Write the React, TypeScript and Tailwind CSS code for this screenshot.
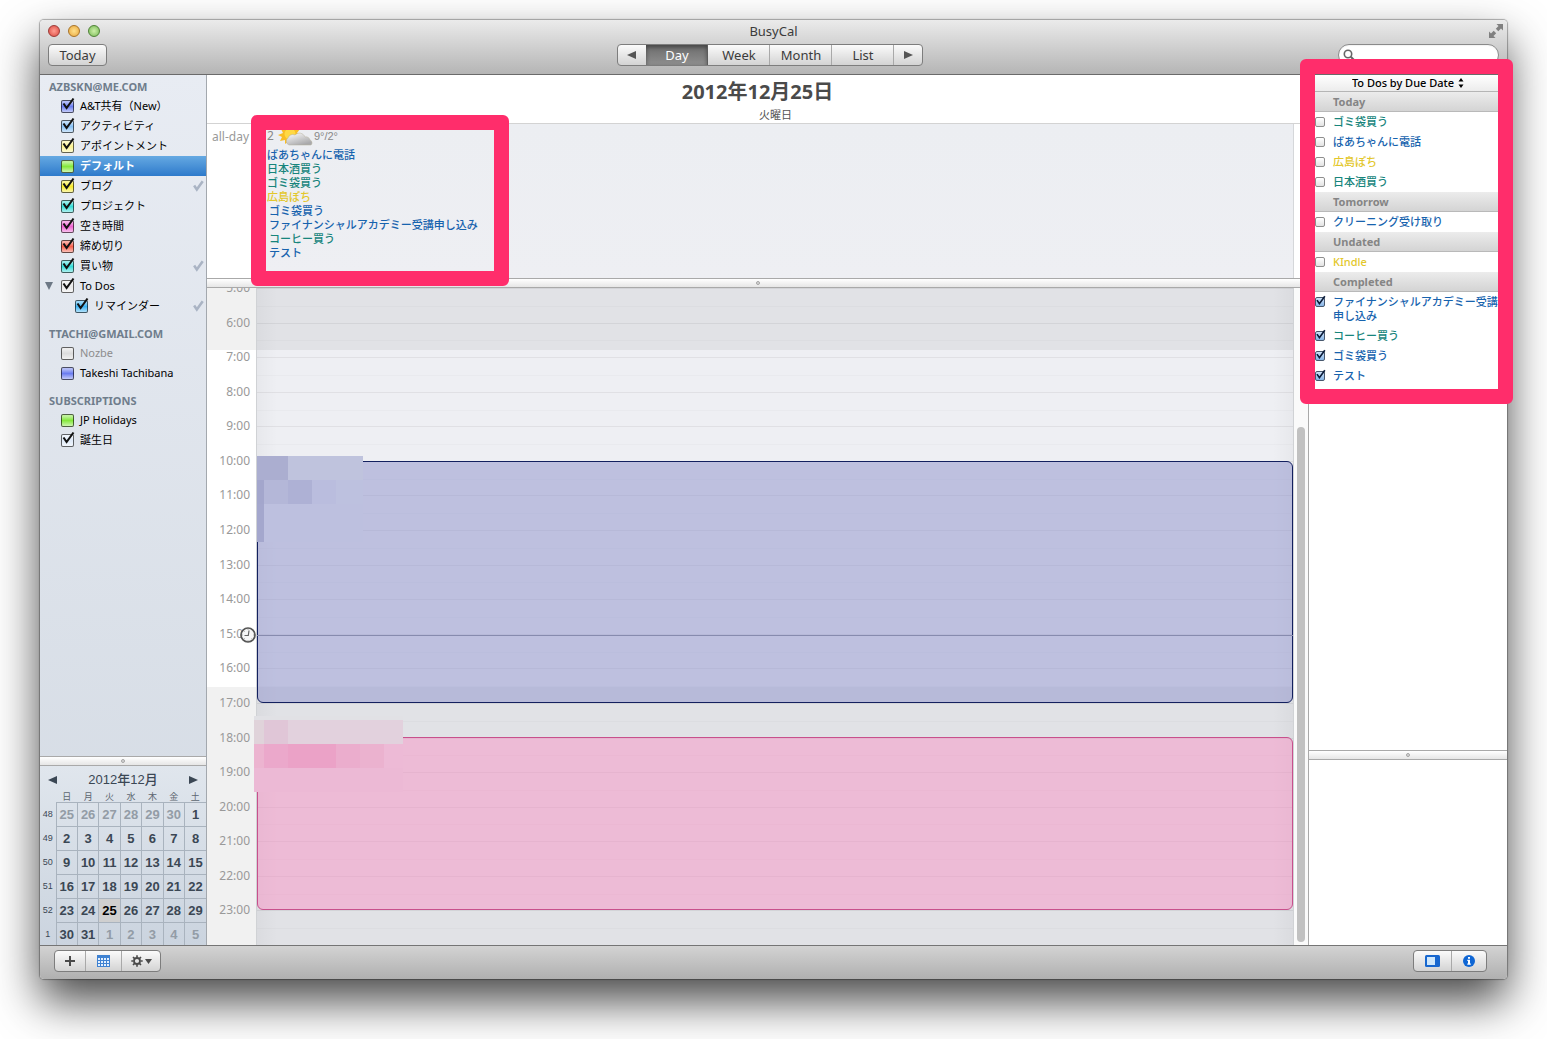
import React from "react";
import clsx from "clsx";

type CalendarItem = {
  name: string;
  color: string;
  checked?: boolean;
  synced?: boolean;
  selected?: boolean;
  muted?: boolean;
  nested?: boolean;
  expandable?: boolean;
};

const calendarGroups: { title: string; items: CalendarItem[] }[] = [
  {
    title: "AZBSKN@ME.COM",
    items: [
      { name: "A&T共有（New）", color: "bg-[#6b7df0]", checked: true },
      { name: "アクティビティ", color: "bg-[#86c0f5]", checked: true },
      { name: "アポイントメント", color: "bg-[#fbf290]", checked: true },
      { name: "デフォルト", color: "bg-[#84e83c]", selected: true },
      { name: "ブログ", color: "bg-[#f7ea2c]", checked: true, synced: true },
      { name: "プロジェクト", color: "bg-[#35dcd8]", checked: true },
      { name: "空き時間", color: "bg-[#ee62d2]", checked: true },
      { name: "締め切り", color: "bg-[#f7604c]", checked: true },
      { name: "買い物", color: "bg-[#35dcd8]", checked: true, synced: true },
      { name: "To Dos", color: "bg-[#e8e8e8]", checked: true, expandable: true },
      { name: "リマインダー", color: "bg-[#3db4f5]", checked: true, synced: true, nested: true },
    ],
  },
  {
    title: "TTACHI@GMAIL.COM",
    items: [
      { name: "Nozbe", color: "bg-[#dcdcdc]", muted: true },
      { name: "Takeshi Tachibana", color: "bg-[#6b7df0]" },
    ],
  },
  {
    title: "SUBSCRIPTIONS",
    items: [
      { name: "JP Holidays", color: "bg-[#84e83c]" },
      { name: "誕生日", color: "bg-[#dfeaf8]", checked: true },
    ],
  },
];

const BLUE = "text-[#1763ae]";
const GREEN = "text-[#17857c]";
const YELLOW = "text-[#e3c72b]";

const allDayItems = [
  { text: "ばあちゃんに電話", color: BLUE },
  { text: "日本酒買う", color: GREEN },
  { text: "ゴミ袋買う", color: GREEN },
  { text: "広島ぽち", color: YELLOW },
  { text: "ゴミ袋買う", color: BLUE, done: true },
  { text: "ファイナンシャルアカデミー受講申し込み", color: BLUE, done: true },
  { text: "コーヒー買う", color: GREEN, done: true },
  { text: "テスト", color: BLUE, done: true },
];

const todoGroups = [
  {
    title: "Today",
    items: [
      { text: "ゴミ袋買う", color: GREEN },
      { text: "ばあちゃんに電話", color: BLUE },
      { text: "広島ぽち", color: YELLOW },
      { text: "日本酒買う", color: GREEN },
    ],
  },
  { title: "Tomorrow", items: [{ text: "クリーニング受け取り", color: BLUE }] },
  { title: "Undated", items: [{ text: "KIndle", color: YELLOW }] },
  {
    title: "Completed",
    done: true,
    items: [
      { text: "ファイナンシャルアカデミー受講申し込み", color: BLUE },
      { text: "コーヒー買う", color: GREEN },
      { text: "ゴミ袋買う", color: BLUE },
      { text: "テスト", color: BLUE },
    ],
  },
];

const weekdays = ["日", "月", "火", "水", "木", "金", "土"];

const weeks = [
  { week: 48, days: [25, 26, 27, 28, 29, 30, 1] },
  { week: 49, days: [2, 3, 4, 5, 6, 7, 8] },
  { week: 50, days: [9, 10, 11, 12, 13, 14, 15] },
  { week: 51, days: [16, 17, 18, 19, 20, 21, 22] },
  { week: 52, days: [23, 24, 25, 26, 27, 28, 29] },
  { week: 1, days: [30, 31, 1, 2, 3, 4, 5] },
];

const FIRST_HOUR = 5;
const LAST_HOUR = 24;
const hours = Array.from({ length: LAST_HOUR - FIRST_HOUR }, (_, i) => FIRST_HOUR + i);

const toPercent = (hour: number) => `${((hour - FIRST_HOUR) / (LAST_HOUR - FIRST_HOUR)) * 100}%`;
const span = (from: number, to: number): React.CSSProperties => ({
  top: toPercent(from),
  height: `${((to - from) / (LAST_HOUR - FIRST_HOUR)) * 100}%`,
});

const views = ["Day", "Week", "Month", "List"];

const BUTTON_FACE = "border border-[#7d7d7d] bg-linear-to-b from-[#fbfbfb] to-[#d3d3d3] rounded";

function Tick({ className, weight = 2.1 }: { className?: string; weight?: number }) {
  return (
    <svg viewBox="0 0 14 14" className={className} fill="none" aria-hidden="true">
      <path d="M2.5 6.5 5.6 11 12.5 1.5" stroke="currentColor" strokeWidth={weight} />
    </svg>
  );
}

function Splitter() {
  return (
    <div className="flex h-[10px] shrink-0 items-center justify-center border-y border-[#a9a9a9] bg-linear-to-b from-white to-[#e6e6e6]">
      <span className="size-1 rounded-full border border-[#a5a5a5] bg-[#d8d8d8]" />
    </div>
  );
}

function Triangle({ direction }: { direction: "left" | "right" | "down" }) {
  const paths = { left: "M9 1 0 5 9 9Z", right: "M1 1 10 5 1 9Z", down: "M1 1 9 1 5 9Z" };
  return (
    <svg viewBox="0 0 10 10" className="size-[10px]" fill="currentColor" aria-hidden="true">
      <path d={paths[direction]} />
    </svg>
  );
}

function TitleBar() {
  const [view, setView] = React.useState("Day");

  return (
    <header className="shrink-0 rounded-t border-b border-[#6a6a6a] bg-linear-to-b from-[#ebebeb] to-[#b5b5b5] pb-2">
      <div className="grid h-[22px] grid-cols-3 items-center px-2">
        <div className="flex gap-2">
          <button type="button" aria-label="Close" className="size-3 rounded-full border border-[#9c3a36] bg-radial from-[#ff9d92] to-[#d8443f]" />
          <button type="button" aria-label="Minimize" className="size-3 rounded-full border border-[#a87328] bg-radial from-[#ffe18b] to-[#e8a637]" />
          <button type="button" aria-label="Zoom" className="size-3 rounded-full border border-[#4f8237] bg-radial from-[#cdf0a9] to-[#76b953]" />
        </div>
        <h1 className="text-center text-[13px] leading-4 text-[#3b3b3b]">BusyCal</h1>
        <button type="button" aria-label="Full screen" className="-mr-1 justify-self-end text-[#808080]">
          <svg viewBox="0 0 14 14" className="size-[14px]" fill="currentColor">
            <path d="M7.500 0H14v6.500l-2-2L9.300 7.200 6.800 4.700 9.500 2ZM0 7.500l2 2 2.700-2.700 2.500 2.500L4.500 12l2 2H0Z" />
          </svg>
        </button>
      </div>
      <div className="mt-0.5 grid grid-cols-3 items-center px-2">
        <button type="button" className={clsx(BUTTON_FACE, "h-[22px] w-[59px] text-[13px] leading-4 text-[#3b3b3b]")}>
          Today
        </button>
        <div className={clsx(BUTTON_FACE, "mr-1.5 flex h-[22px] justify-self-center overflow-hidden text-[13px] leading-4 text-[#3b3b3b]")}>
          <button type="button" aria-label="Previous day" className="flex w-7 items-center justify-center text-[#555]">
            <Triangle direction="left" />
          </button>
          {views.map((name) => (
            <button
              key={name}
              type="button"
              aria-pressed={view === name}
              onClick={() => setView(name)}
              className={clsx(
                "w-[62px] border-r",
                view === name
                  ? "border-[#5c5c5c] bg-linear-to-b from-[#6c6c6c] to-[#8f8f8f] text-white inset-shadow-sm inset-shadow-black/40"
                  : "border-[#a9a9a9]",
              )}
            >
              {name}
            </button>
          ))}
          <button type="button" aria-label="Next day" className="flex w-7 items-center justify-center text-[#555]">
            <Triangle direction="right" />
          </button>
        </div>
        <label className="flex h-[22px] w-[161px] items-center gap-1 justify-self-end rounded-full border border-[#8a8a8a] bg-white px-1 inset-shadow-xs">
          <svg viewBox="0 0 12 12" className="size-3 shrink-0 text-[#666]" fill="none" stroke="currentColor" strokeWidth="1.6">
            <circle cx="5" cy="5" r="3.700" />
            <path d="m7.800 7.800 3.400 3.400" strokeWidth="2" />
          </svg>
          <input type="search" aria-label="Search" className="w-full min-w-0 bg-transparent text-[11px] outline-none" />
        </label>
      </div>
    </header>
  );
}

function CalendarRow({ item }: { item: CalendarItem }) {
  return (
    <li
      className={clsx(
        "flex h-5 items-center pr-0.5",
        item.nested ? "pl-[35px]" : item.expandable ? "pl-1" : "pl-[21px]",
        item.selected && "bg-linear-to-b from-[#65a9e2] to-[#2d7acb] font-bold text-white",
        item.muted && "text-[#8d8d8d]",
      )}
    >
      {item.expandable && (
        <button type="button" aria-label="Collapse" className="mr-[7px] text-[#6d7885]">
          <Triangle direction="down" />
        </button>
      )}
      <label className="flex flex-1 items-center gap-1.5">
        <span className="relative size-[13px]">
          <input
            type="checkbox"
            defaultChecked={item.checked}
            className={clsx(
              "peer block size-[13px] appearance-none rounded-xs border border-black/60 bg-linear-to-b from-white/50 from-10% via-transparent via-50% to-white/60",
              item.color,
            )}
          />
          <Tick className="pointer-events-none absolute bottom-0.5 left-0 hidden size-[14px] text-[#111] peer-checked:block" />
        </span>
        <span className="leading-4">{item.name}</span>
      </label>
      {item.synced && <Tick weight={3} className="size-3 text-[#aab4c4]" />}
    </li>
  );
}

function MiniCalendar() {
  return (
    <section className="h-[179px] shrink-0 overflow-hidden bg-linear-to-b from-[#e0e6ed] to-[#cbd4df] font-['Liberation_Sans','Noto_Sans_CJK_JP',sans-serif] text-[#3b4754]">
      <div className="flex h-[26px] items-center justify-between px-2 pt-0.5">
        <button type="button" aria-label="Previous month">
          <Triangle direction="left" />
        </button>
        <h2 className="text-[13px] leading-4 font-medium">2012年12月</h2>
        <button type="button" aria-label="Next month">
          <Triangle direction="right" />
        </button>
      </div>
      <table className="w-full table-fixed border-collapse text-center">
        <thead>
          <tr className="h-[10px] text-[9px] leading-[10px] text-[#5c6670]">
            <th className="w-4" aria-label="Week" />
            {weekdays.map((day) => (
              <th key={day} className="p-0 font-normal">{day}</th>
            ))}
          </tr>
        </thead>
        <tbody>
          {weeks.map(({ week, days }, row) => (
            <tr key={week} className="h-6">
              <th className="p-0 text-[9px] font-normal">{week}</th>
              {days.map((day, i) => {
                const outside = (row === 0 && day > 20) || (row === 5 && day < 10);
                const isToday = row === 4 && day === 25;
                return (
                  <td
                    key={i}
                    className={clsx(
                      "border-t border-l border-[#a9b3be] p-0 text-[13px] leading-4 font-bold",
                      outside && "text-[#939ca6]",
                      isToday && "bg-[#cfcfcf] text-black",
                    )}
                  >
                    {day}
                  </td>
                );
              })}
            </tr>
          ))}
        </tbody>
      </table>
    </section>
  );
}

function Sidebar() {
  return (
    <aside className="flex w-[167px] shrink-0 flex-col border-r border-[#a3a8ae] bg-linear-to-b from-[#e8ecf3] to-[#d3dae3]">
      <nav className="flex flex-1 flex-col gap-2 pt-0.5 text-[11px]">
        {calendarGroups.map((group) => (
          <section key={group.title}>
            <h2 className="h-[19px] pl-[9px] text-[11px] leading-[19px] font-bold text-[#6f7d8c]">{group.title}</h2>
            <ul>
              {group.items.map((item) => (
                <CalendarRow key={item.name} item={item} />
              ))}
            </ul>
          </section>
        ))}
      </nav>
      <Splitter />
      <MiniCalendar />
    </aside>
  );
}

function Weather() {
  return (
    <svg viewBox="0 0 36 20" className="h-5 w-9" aria-label="Partly cloudy">
      <defs>
        <linearGradient id="cloud" x1="0" y1="0" x2="0.600" y2="1">
          <stop offset="0" stopColor="#fff" />
          <stop offset="1" stopColor="#a9a9ab" />
        </linearGradient>
      </defs>
      <path
        d="M11 0l2 3 3-3 1 4 5-1-3 4 4 2-4 2 1 4-4-1-2 4-3-3-4 3 0-4-5 1 2-4-4-2 5-2-2-4 5 1Z"
        fill="#f8bd25"
      />
      <circle cx="12" cy="8" r="5.500" fill="#ffd944" />
      <path
        d="M11 19a4 4 0 0 1-1-7 5 5 0 0 1 7-3 6 6 0 0 1 10 2 4 4 0 0 1 5 3 3 3 0 0 1 1 5Z"
        fill="url(#cloud)"
        stroke="#b5b09c"
        strokeWidth="0.500"
      />
    </svg>
  );
}

function Mosaic({ rows }: { rows: { height: string; cells: string[] }[] }) {
  return (
    <>
      {rows.map((row, i) => (
        <div key={i} className={clsx("flex", row.height)}>
          {row.cells.map((cell, j) => (
            <span key={j} className={cell} />
          ))}
        </div>
      ))}
    </>
  );
}

const blueMosaic = [
  { height: "h-6", cells: ["w-[31px] bg-[#abaed0]", "flex-1 bg-[#bfc3dd]"] },
  { height: "h-6", cells: ["w-[7px] bg-[#a3a6cc]", "w-6 bg-[#b4b7d8]", "w-6 bg-[#aeb1d5]", "w-6 bg-[#babdde]", "flex-1 bg-[#bdc1df]"] },
  { height: "h-[38px]", cells: ["w-[7px] bg-[#a4a7cd]", "flex-1 bg-[#bdc0df]"] },
];

const pinkMosaic = [
  { height: "h-1", cells: ["flex-1 bg-[#e1e1e5]"] },
  { height: "h-6", cells: ["w-[10px] bg-[#e0d3da]", "w-6 bg-[#e0c6d7]", "flex-1 bg-[#e2d1dd]"] },
  { height: "h-6", cells: ["w-[10px] bg-[#ecb4d0]", "w-6 bg-[#eba8cb]", "w-12 bg-[#eba2c7]", "w-6 bg-[#ebadcd]", "w-6 bg-[#ebb2cf]", "flex-1 bg-[#edbad6]"] },
  { height: "h-6", cells: ["flex-1 bg-[#ecb9d5]"] },
];

function DayView() {
  return (
    <main className="flex min-w-0 flex-1 flex-col bg-white">
      <header className="flex h-[49px] shrink-0 flex-col items-center border-b border-[#d3d3d3] pt-[5px]">
        <h2 className="text-[20px] leading-6 font-bold text-[#4a4a4a]">2012年12月25日</h2>
        <p className="pl-9 text-[11px] leading-[22px] text-[#555]">火曜日</p>
      </header>

      <section className="flex h-[154px] shrink-0">
        <h3 className="w-[49px] shrink-0 pt-[5px] pl-[5px] text-[12px] leading-4 whitespace-nowrap text-[#999]">all-day</h3>
        <div className="relative flex-1 border-x border-[#d5d7da] bg-linear-to-b from-[#eceef2] to-[#eeeff3] px-2.5">
          <div className="flex h-6 items-center text-[11px] text-[#888]">
            <span className="text-[12px]">2</span>
            <span className="ml-1">
              <Weather />
            </span>
            <span className="font-['Liberation_Sans',sans-serif]">9°/2°</span>
          </div>
          <ul className="text-[11px] leading-[14px] font-medium">
            {allDayItems.map((item, i) => (
              <li key={i} className={clsx(item.color, item.done && "pl-0.5")}>{item.text}</li>
            ))}
          </ul>
          <div className="pointer-events-none absolute -top-[9px] -left-[6px] h-[171px] w-[258px] rounded-md border-[15px] border-[#ff2d6b]" />
        </div>
        <div className="w-[14px] shrink-0" />
      </section>

      <Splitter />

      <section className="flex min-h-0 flex-1">
        <div className="relative flex w-[49px] shrink-0 flex-col">
          <div className="absolute inset-x-0 bg-[#f1f1f1]" style={span(5, 6.8)} />
          <div className="absolute inset-x-0 bg-[#f1f1f1]" style={span(16.53, 24)} />
          <ol className="relative flex flex-1 flex-col overflow-hidden pr-1.5 text-right text-[12px] leading-4 text-[#999]">
            {hours.map((hour) => (
              <li key={hour} className="min-h-0 flex-1">
                <span className="block -translate-y-1/2">{hour}:00</span>
              </li>
            ))}
          </ol>
          <svg viewBox="0 0 16 16" style={{ top: toPercent(15.03) }} className="absolute right-0 size-4 -translate-y-1/2" aria-label="Now">
            <circle cx="8" cy="8" r="7" fill="#f6f6f6" stroke="#565656" strokeWidth="1.700" />
            <path d="M9 3.500 8.300 8.500H4.500" fill="none" stroke="#666" strokeWidth="1.200" />
            <path d="M8 2v1M8 13v1M2 8h1M13 8h1M4 12l.7-.7M11.500 11.500l.7.7M4 4l.7.700" stroke="#aaa" />
          </svg>
        </div>

        <div className="relative flex-1 border-x border-[#d0d2d5] bg-[#eeeff3]">
          <div className="absolute inset-x-0 bg-[#e1e2e6]" style={span(5, 6.8)} />
          <div className="absolute inset-x-0 bg-[#e1e2e6]" style={span(16.53, 24)} />
          <div className="relative flex h-full flex-col">
            {hours.map((hour) => (
              <div key={hour} className="flex flex-1 flex-col border-t border-black/6">
                <div className="mt-auto h-1/2 border-t border-black/2" />
              </div>
            ))}
          </div>
          <div className="absolute inset-y-0 left-0 w-5 bg-linear-to-r from-black/3 to-transparent" />
          <div className="absolute inset-y-0 right-0 w-5 bg-linear-to-l from-black/3 to-transparent" />
          <article aria-label="10:00 – 17:00" className="absolute inset-x-0 rounded-md border border-[#13205f] bg-[#8e92cb]/50" style={span(10, 17)}>
            <div className="absolute -top-1.5 -left-px w-[106px]">
              <Mosaic rows={blueMosaic} />
            </div>
          </article>
          <article aria-label="18:00 – 23:00" className="absolute inset-x-0 rounded-md border border-[#c8508c] bg-[#f994c5]/50" style={span(17.98, 22.99)}>
            <div className="absolute -top-[22px] -left-1 w-[149px]">
              <Mosaic rows={pinkMosaic} />
            </div>
          </article>
          <div className="absolute inset-x-0 border-t border-[#878bae]" style={{ top: toPercent(15.03) }} />
        </div>

        <div className="flex w-[14px] shrink-0 flex-col items-center bg-[#fafafa] pb-[3px]">
          <div className="min-h-0 flex-[27]" />
          <div className="w-2 flex-[100] rounded-full bg-[#c1c1c1]" />
        </div>
      </section>
    </main>
  );
}

function TodoPanel() {
  return (
    <aside className="relative flex w-[199px] shrink-0 flex-col border-l border-[#a9a9a9] bg-white">
      <div className="flex min-h-0 flex-1 flex-col">
        <div className="flex h-[17px] shrink-0 items-center justify-center gap-1 border-b border-[#b5b5b5] bg-linear-to-b from-white to-[#ececec]">
          <select aria-label="Sort to dos" className="field-sizing-content appearance-none text-[11px] leading-4 font-medium outline-none">
            <option>To Dos by Due Date</option>
            <option>To Dos by Priority</option>
          </select>
          <svg viewBox="0 0 6 10" className="h-[10px] w-1.5" aria-hidden="true">
            <path d="M3 0 5.500 3.500h-5ZM3 10 .5 6.500h5Z" />
          </svg>
        </div>
        {todoGroups.map((group) => (
          <section key={group.title}>
            <h3 className="h-5 border-b border-[#b9b9b9] bg-linear-to-b from-[#ececec] to-[#d4d4d4] pl-6 text-[11px] leading-[19px] font-bold text-[#858585]">
              {group.title}
            </h3>
            <ul className="text-[11px] leading-[14px] font-medium">
              {group.items.map((item) => (
                <li key={item.text}>
                  <label className="flex gap-2 py-[3px] pr-2 pl-1.5">
                    <span className="relative mt-0.5 size-[10px] shrink-0">
                      <input
                        type="checkbox"
                        defaultChecked={group.done}
                        className="peer block size-[10px] appearance-none rounded-xs border border-[#8e8e8e] bg-linear-to-b from-white to-[#e2e2e2] checked:border-[#48586e] checked:from-[#cfe2f8] checked:to-[#86b4e6]"
                      />
                      <Tick className="pointer-events-none absolute bottom-px left-0 hidden size-[11px] text-[#0a1a38] peer-checked:block" />
                    </span>
                    <span className={item.color}>{item.text}</span>
                  </label>
                </li>
              ))}
            </ul>
          </section>
        ))}
      </div>
      <Splitter />
      <div className="h-[185px] shrink-0" />
      <div className="pointer-events-none absolute -top-4 -right-1.5 -left-[9px] h-[345px] rounded-md border-[15px] border-[#ff2d6b]" />
    </aside>
  );
}

function BottomBar() {
  return (
    <footer className="flex h-[34px] shrink-0 items-start justify-between rounded-b border-t border-[#757575] bg-linear-to-b from-[#d3d3d3] to-[#b0b0b0] pt-1 pr-5 pl-[14px]">
      <div className={clsx(BUTTON_FACE, "flex h-[22px] text-[#4a4a4a]")}>
        <button type="button" aria-label="Add" className="flex w-[31px] items-center justify-center border-r border-[#a9a9a9]">
          <svg viewBox="0 0 10 10" className="size-[10px]" fill="none" stroke="currentColor" strokeWidth="2">
            <path d="M5 0v10M0 5h10" />
          </svg>
        </button>
        <button type="button" aria-label="Mini calendar" className="flex w-9 items-center justify-center border-r border-[#a9a9a9]">
          <svg viewBox="0 0 13 12" className="h-3 w-[13px]">
            <path d="M0 0h13v12H0Z" fill="#3f82d2" />
            <path
              d="M1 3h2v2H1ZM4 3h2v2H4ZM7 3h2v2H7ZM10 3h2v2h-2ZM1 6h2v2H1ZM4 6h2v2H4ZM7 6h2v2H7ZM10 6h2v2h-2ZM1 9h2v2H1ZM4 9h2v2H4ZM7 9h2v2H7ZM10 9h2v2h-2Z"
              fill="#e3f0ff"
            />
          </svg>
        </button>
        <button type="button" aria-label="Actions" className="flex w-[38px] items-center justify-center gap-0.5">
          <svg viewBox="0 0 12 12" className="size-3" fill="none" stroke="currentColor">
            <circle cx="6" cy="6" r="3" strokeWidth="1.800" />
            <path
              d="M6 .3v2M6 9.700v2M.3 6h2M9.700 6h2M2 2l1.400 1.400M8.600 8.600 10 10M10 2 8.600 3.400M3.400 8.600 2 10"
              strokeWidth="1.600"
            />
          </svg>
          <svg viewBox="0 0 7 5" className="h-[5px] w-[7px]" fill="currentColor" aria-hidden="true">
            <path d="M0 0h7L3.500 5Z" />
          </svg>
        </button>
      </div>
      <div className={clsx(BUTTON_FACE, "flex h-[22px]")}>
        <button type="button" aria-label="Show to dos" className="flex w-[38px] items-center justify-center border-r border-[#a9a9a9]">
          <svg viewBox="0 0 15 12" className="h-3 w-[15px]">
            <rect width="15" height="12" rx="1.500" fill="#1767cf" />
            <path d="M2 2h8v8H2Z" fill="#cfe7fb" />
          </svg>
        </button>
        <button type="button" aria-label="Info" className="flex w-[34px] items-center justify-center">
          <svg viewBox="0 0 12 12" className="size-3">
            <circle cx="6" cy="6" r="6" fill="#0f66d4" />
            <path d="M5 2h2v1.700H5ZM4.300 4.800H7v3.700h.8v1.200H4.300V8.500H5V6h-.7Z" fill="#fff" />
          </svg>
        </button>
      </div>
    </footer>
  );
}

export default function App() {
  return (
    <div className="flex h-screen min-h-[900px] overflow-hidden bg-white px-10 pt-5 pb-[60px] font-['Noto_Sans','Noto_Sans_CJK_JP',sans-serif] text-black">
      <div className="flex min-w-0 flex-1 flex-col rounded shadow-[0_0_1px_1px_rgba(0,0,0,0.3),0_22px_46px_0px_rgba(0,0,0,0.72)]">
        <TitleBar />
        <div className="flex min-h-0 flex-1">
          <Sidebar />
          <DayView />
          <TodoPanel />
        </div>
        <BottomBar />
      </div>
    </div>
  );
}
